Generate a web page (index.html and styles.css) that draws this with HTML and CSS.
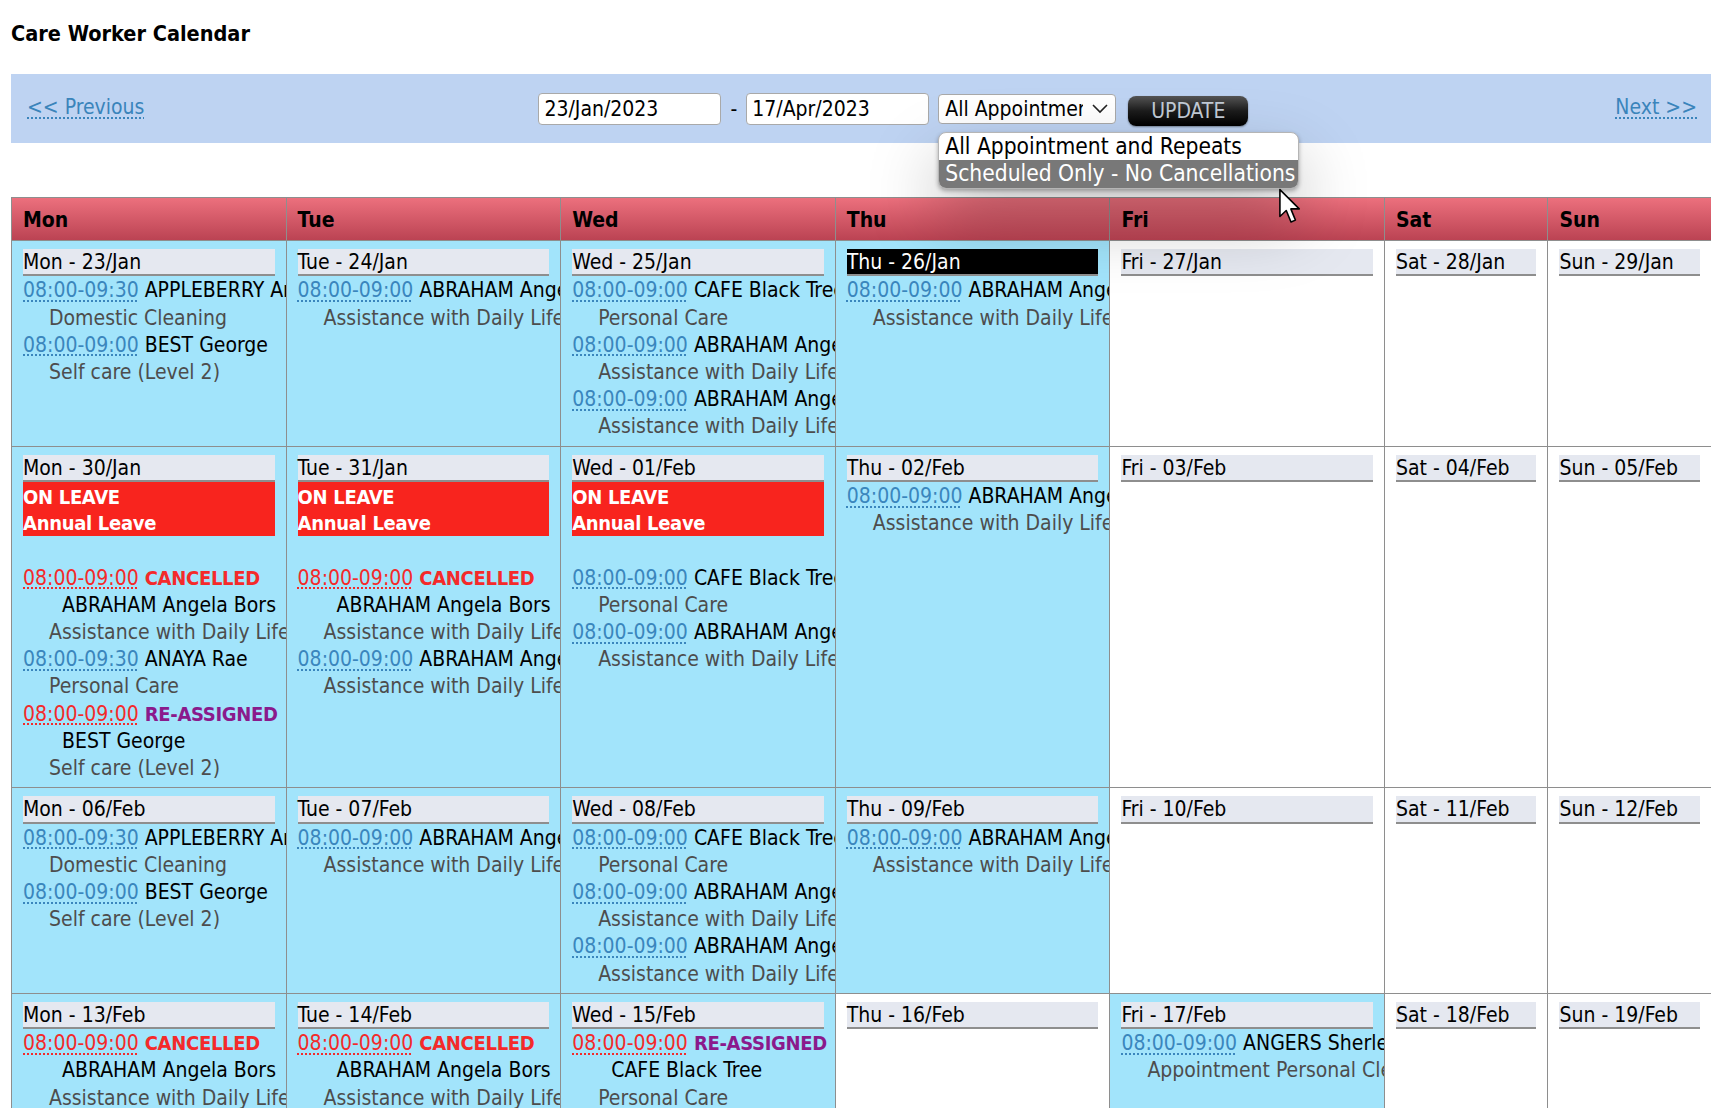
FILE: index.html
```html
<!DOCTYPE html>
<html lang="en">
<head>
    <meta charset="UTF-8">
    <meta name="viewport" content="width=device-width, initial-scale=1.0">
    <title>Care Worker Calendar</title>
    <link rel="stylesheet" href="styles.css">
</head>
<body>
<div class="page">
    <h1>Care Worker Calendar</h1>

    <!-- Toolbar -->
    <div class="toolbar">
        <a href="#" class="nav-link">&lt;&lt; Previous</a>
        <div class="filters">
            <input type="text" class="date" value="23/Jan/2023">
            <span class="dash">-</span>
            <input type="text" class="date" value="17/Apr/2023">
            <div class="select-wrap">
                <div class="select">
                    <span class="select-text">All Appointment and Repeats</span>
                    <svg class="chevron" width="16" height="10" viewBox="0 0 16 10"><path d="M1 1 L8 8 L15 1" fill="none" stroke="#222" stroke-width="1.6"/></svg>
                </div>
                <div class="dropdown">
                    <div class="opt">All Appointment and Repeats</div>
                    <div class="opt sel">Scheduled Only - No Cancellations</div>
                </div>
                <svg class="pointer" width="26" height="38" viewBox="0 0 16 24"><path d="M1 1 L1 18 L5 14.2 L8 21.5 L10.8 20.3 L7.9 13.2 L13.2 13.2 Z" fill="#fff" stroke="#000" stroke-width="1" stroke-linejoin="round"/></svg>
            </div>
            <button type="button" class="update">UPDATE</button>
        </div>
        <a href="#" class="nav-link next">Next &gt;&gt;</a>
    </div>

    <!-- Calendar -->
    <div class="calendar">
        <div class="head">Mon</div>
        <div class="head">Tue</div>
        <div class="head">Wed</div>
        <div class="head">Thu</div>
        <div class="head">Fri</div>
        <div class="head">Sat</div>
        <div class="head">Sun</div>

        <!-- Week 23/Jan -->
        <div class="cell busy">
            <div class="lbl">Mon - 23/Jan</div>
            <div class="ln"><a href="#" class="time">08:00-09:30</a> APPLEBERRY Anne</div>
            <div class="ln sub">Domestic Cleaning</div>
            <div class="ln"><a href="#" class="time">08:00-09:00</a> BEST George</div>
            <div class="ln sub">Self care (Level 2)</div>
        </div>
        <div class="cell busy">
            <div class="lbl">Tue - 24/Jan</div>
            <div class="ln"><a href="#" class="time">08:00-09:00</a> ABRAHAM Angela Bors</div>
            <div class="ln sub">Assistance with Daily Life</div>
        </div>
        <div class="cell busy">
            <div class="lbl">Wed - 25/Jan</div>
            <div class="ln"><a href="#" class="time">08:00-09:00</a> CAFE Black Tree</div>
            <div class="ln sub">Personal Care</div>
            <div class="ln"><a href="#" class="time">08:00-09:00</a> ABRAHAM Angela Bors</div>
            <div class="ln sub">Assistance with Daily Life</div>
            <div class="ln"><a href="#" class="time">08:00-09:00</a> ABRAHAM Angela Bors</div>
            <div class="ln sub">Assistance with Daily Life</div>
        </div>
        <div class="cell busy">
            <div class="lbl today">Thu - 26/Jan</div>
            <div class="ln"><a href="#" class="time">08:00-09:00</a> ABRAHAM Angela Bors</div>
            <div class="ln sub">Assistance with Daily Life</div>
        </div>
        <div class="cell"><div class="lbl">Fri - 27/Jan</div></div>
        <div class="cell"><div class="lbl">Sat - 28/Jan</div></div>
        <div class="cell"><div class="lbl">Sun - 29/Jan</div></div>

        <!-- Week 30/Jan -->
        <div class="cell busy">
            <div class="lbl">Mon - 30/Jan</div>
            <div class="leave">ON LEAVE<br>Annual Leave</div>
            <div class="gap"></div>
            <div class="ln"><a href="#" class="time off">08:00-09:00</a> <span class="cancelled">CANCELLED</span></div>
            <div class="ln who">ABRAHAM Angela Bors</div>
            <div class="ln sub">Assistance with Daily Life</div>
            <div class="ln"><a href="#" class="time">08:00-09:30</a> ANAYA Rae</div>
            <div class="ln sub">Personal Care</div>
            <div class="ln"><a href="#" class="time off">08:00-09:00</a> <span class="reassigned">RE-ASSIGNED</span></div>
            <div class="ln who">BEST George</div>
            <div class="ln sub">Self care (Level 2)</div>
        </div>
        <div class="cell busy">
            <div class="lbl">Tue - 31/Jan</div>
            <div class="leave">ON LEAVE<br>Annual Leave</div>
            <div class="gap"></div>
            <div class="ln"><a href="#" class="time off">08:00-09:00</a> <span class="cancelled">CANCELLED</span></div>
            <div class="ln who">ABRAHAM Angela Bors</div>
            <div class="ln sub">Assistance with Daily Life</div>
            <div class="ln"><a href="#" class="time">08:00-09:00</a> ABRAHAM Angela Bors</div>
            <div class="ln sub">Assistance with Daily Life</div>
        </div>
        <div class="cell busy">
            <div class="lbl">Wed - 01/Feb</div>
            <div class="leave">ON LEAVE<br>Annual Leave</div>
            <div class="gap"></div>
            <div class="ln"><a href="#" class="time">08:00-09:00</a> CAFE Black Tree</div>
            <div class="ln sub">Personal Care</div>
            <div class="ln"><a href="#" class="time">08:00-09:00</a> ABRAHAM Angela Bors</div>
            <div class="ln sub">Assistance with Daily Life</div>
        </div>
        <div class="cell busy">
            <div class="lbl">Thu - 02/Feb</div>
            <div class="ln"><a href="#" class="time">08:00-09:00</a> ABRAHAM Angela Bors</div>
            <div class="ln sub">Assistance with Daily Life</div>
        </div>
        <div class="cell"><div class="lbl">Fri - 03/Feb</div></div>
        <div class="cell"><div class="lbl">Sat - 04/Feb</div></div>
        <div class="cell"><div class="lbl">Sun - 05/Feb</div></div>

        <!-- Week 06/Feb -->
        <div class="cell busy">
            <div class="lbl">Mon - 06/Feb</div>
            <div class="ln"><a href="#" class="time">08:00-09:30</a> APPLEBERRY Anne</div>
            <div class="ln sub">Domestic Cleaning</div>
            <div class="ln"><a href="#" class="time">08:00-09:00</a> BEST George</div>
            <div class="ln sub">Self care (Level 2)</div>
        </div>
        <div class="cell busy">
            <div class="lbl">Tue - 07/Feb</div>
            <div class="ln"><a href="#" class="time">08:00-09:00</a> ABRAHAM Angela Bors</div>
            <div class="ln sub">Assistance with Daily Life</div>
        </div>
        <div class="cell busy">
            <div class="lbl">Wed - 08/Feb</div>
            <div class="ln"><a href="#" class="time">08:00-09:00</a> CAFE Black Tree</div>
            <div class="ln sub">Personal Care</div>
            <div class="ln"><a href="#" class="time">08:00-09:00</a> ABRAHAM Angela Bors</div>
            <div class="ln sub">Assistance with Daily Life</div>
            <div class="ln"><a href="#" class="time">08:00-09:00</a> ABRAHAM Angela Bors</div>
            <div class="ln sub">Assistance with Daily Life</div>
        </div>
        <div class="cell busy">
            <div class="lbl">Thu - 09/Feb</div>
            <div class="ln"><a href="#" class="time">08:00-09:00</a> ABRAHAM Angela Bors</div>
            <div class="ln sub">Assistance with Daily Life</div>
        </div>
        <div class="cell"><div class="lbl">Fri - 10/Feb</div></div>
        <div class="cell"><div class="lbl">Sat - 11/Feb</div></div>
        <div class="cell"><div class="lbl">Sun - 12/Feb</div></div>

        <!-- Week 13/Feb -->
        <div class="cell busy">
            <div class="lbl">Mon - 13/Feb</div>
            <div class="ln"><a href="#" class="time off">08:00-09:00</a> <span class="cancelled">CANCELLED</span></div>
            <div class="ln who">ABRAHAM Angela Bors</div>
            <div class="ln sub">Assistance with Daily Life</div>
            <div class="ln"><a href="#" class="time">08:00-09:30</a> ANAYA Rae</div>
            <div class="ln sub">Personal Care</div>
            <div class="ln"><a href="#" class="time">08:00-09:00</a> BEST George</div>
            <div class="ln sub">Self care (Level 2)</div>
        </div>
        <div class="cell busy">
            <div class="lbl">Tue - 14/Feb</div>
            <div class="ln"><a href="#" class="time off">08:00-09:00</a> <span class="cancelled">CANCELLED</span></div>
            <div class="ln who">ABRAHAM Angela Bors</div>
            <div class="ln sub">Assistance with Daily Life</div>
            <div class="ln"><a href="#" class="time">08:00-09:00</a> ABRAHAM Angela Bors</div>
            <div class="ln sub">Assistance with Daily Life</div>
        </div>
        <div class="cell busy">
            <div class="lbl">Wed - 15/Feb</div>
            <div class="ln"><a href="#" class="time off">08:00-09:00</a> <span class="reassigned">RE-ASSIGNED</span></div>
            <div class="ln who">CAFE Black Tree</div>
            <div class="ln sub">Personal Care</div>
            <div class="ln"><a href="#" class="time">08:00-09:00</a> ABRAHAM Angela Bors</div>
            <div class="ln sub">Assistance with Daily Life</div>
        </div>
        <div class="cell"><div class="lbl">Thu - 16/Feb</div></div>
        <div class="cell busy">
            <div class="lbl">Fri - 17/Feb</div>
            <div class="ln"><a href="#" class="time">08:00-09:00</a> ANGERS Sherley</div>
            <div class="ln sub">Appointment Personal Cleaning</div>
        </div>
        <div class="cell"><div class="lbl">Sat - 18/Feb</div></div>
        <div class="cell"><div class="lbl">Sun - 19/Feb</div></div>
    </div>
</div>
</body>
</html>
```

FILE: styles.css
```css
html {
    overflow: hidden;
}

body {
    margin: 0;
    font-family: "DejaVu Sans Condensed", "DejaVu Sans", sans-serif;
    font-stretch: condensed;
    font-size: 21px;
    color: #000;
    background-color: #fff;
}

.page {
    padding-left: 11px;
}

h1 {
    margin: 0;
    padding-top: 22px;
    font-size: 21.5px;
    line-height: 24px;
    font-weight: bold;
}

/* Toolbar */
.toolbar {
    display: flex;
    align-items: center;
    height: 69px;
    margin-top: 28px;
    padding: 0 14px 0 16px;
    background-color: #bed3f2;
}

.nav-link {
    margin-top: -4px;
    color: #3a84bb;
    text-decoration: underline dotted;
    text-decoration-thickness: 2px;
    text-underline-offset: 4px;
}

.next {
    margin-left: auto;
}

.filters {
    display: flex;
    align-items: center;
    margin-left: 394px;
}

.date {
    box-sizing: border-box;
    width: 183px;
    height: 32px;
    padding: 0 5px;
    border: 1px solid #a9a9a9;
    border-radius: 4px;
    background-color: #fff;
    color: #000;
    font: inherit;
}

.dash {
    margin: 0 9px;
}

.select-wrap {
    position: relative;
    margin-left: 9px;
}

.select {
    box-sizing: border-box;
    display: flex;
    align-items: center;
    width: 178px;
    height: 30px;
    padding: 0 7px 0 6px;
    border: 1px solid #a9a9a9;
    border-radius: 4px;
    background-color: #fff;
}

.select-text {
    flex: 1;
    overflow: hidden;
    white-space: nowrap;
}

.chevron {
    flex: none;
    margin-left: 9px;
}

.dropdown {
    position: absolute;
    top: 38px;
    left: 0;
    z-index: 5;
    width: 361px;
    overflow: hidden;
    background-color: #fff;
    border: 1px solid #b5b5b5;
    border-radius: 8px;
    box-sizing: border-box;
    box-shadow: 0 2px 4px rgba(0, 0, 0, 0.3), 0 30px 70px rgba(0, 0, 0, 0.28);
}

.opt {
    padding: 0 6px;
    font-size: 22.6px;
    line-height: 27.5px;
    white-space: nowrap;
}

.opt.sel {
    background-color: #787878;
    color: #fff;
}

.pointer {
    position: absolute;
    top: 94px;
    left: 340px;
    z-index: 6;
}

.update {
    width: 120px;
    height: 30px;
    margin-left: 12px;
    margin-top: 4px;
    border: none;
    border-radius: 8px;
    background: linear-gradient(#555, #1c1c1c 50%, #000);
    box-shadow: 0 1px 2px rgba(0, 0, 0, 0.4);
    color: #c2cbd6;
    font: inherit;
}

/* Calendar */
.calendar {
    display: grid;
    grid-template-columns: repeat(5, 273.6px) 1fr 1fr;
    gap: 1px;
    margin-top: 54px;
    background-color: #8e8e8e;
    border: 1px solid #8e8e8e;
    border-right: none;
}

.head {
    height: 39px;
    padding: 3px 0 0 11px;
    line-height: 39px;
    font-weight: bold;
    background: linear-gradient(#ec707d, #bb4353);
}

.cell {
    min-width: 0;
    padding: 8px 11px 6px;
    overflow: hidden;
    background-color: #fff;
}

.cell.busy {
    background-color: #a2e4fb;
}

.lbl {
    padding-top: 2px;
    line-height: 23.4px;
    white-space: nowrap;
    background-color: #e5e8f0;
    border-bottom: 2px solid #8e8e8e;
}

.lbl.today {
    background-color: #000;
    color: #fff;
}

.ln {
    padding-top: 2px;
    line-height: 25.2px;
    white-space: nowrap;
}

.sub {
    padding-left: 26px;
    color: #4d4d4d;
}

.who {
    padding-left: 39px;
}

.time {
    color: #3a86bd;
    text-decoration: underline dotted;
    text-decoration-thickness: 2px;
    text-underline-offset: 3px;
}

.time.off {
    color: #f42a2a;
}

.cancelled,
.reassigned {
    font-size: 20px;
    font-weight: bold;
    letter-spacing: -0.3px;
}

.cancelled {
    color: #f42a2a;
}

.reassigned {
    color: #8a1a8c;
}

.leave {
    padding-top: 2px;
    line-height: 26.2px;
    font-size: 20px;
    font-weight: bold;
    letter-spacing: -0.3px;
    color: #fff;
    background-color: #f8241e;
}

.leave-line {
    display: block;
}

.gap {
    height: 27.2px;
}
```
